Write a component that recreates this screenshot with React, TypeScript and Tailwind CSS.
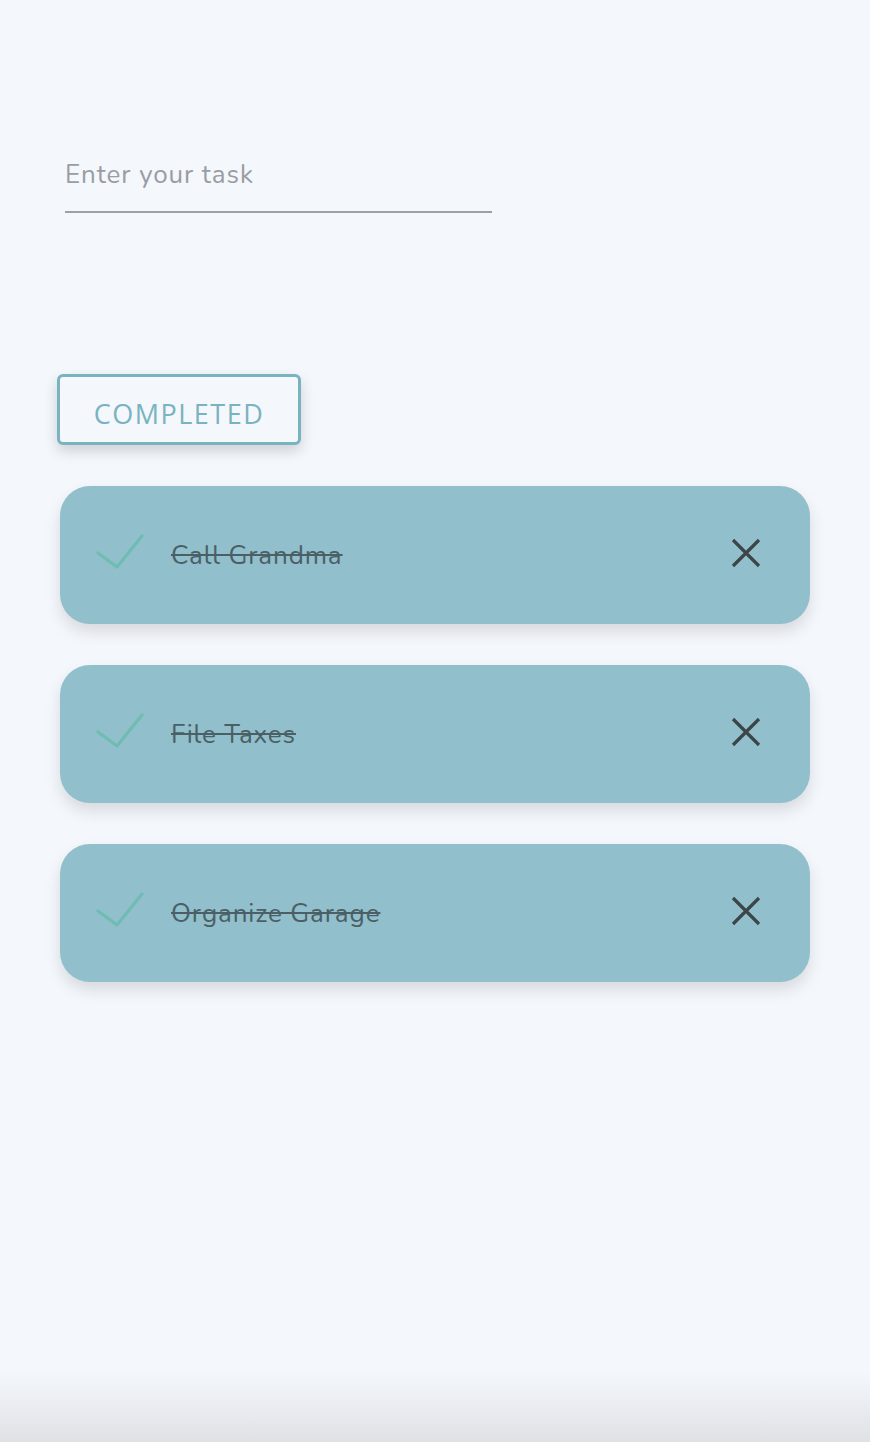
const tasks = ["Call Grandma", "File Taxes", "Organize Garage"]

function CheckIcon() {
  return (
    <svg width="48" height="36" viewBox="0 0 48 36" fill="none">
      <path d="M2 20 L21 34 L46 3" stroke="#6fbcb3" strokeWidth="3.2" strokeLinecap="round" strokeLinejoin="round" />
    </svg>
  )
}

function CloseIcon() {
  return (
    <svg width="30" height="30" viewBox="0 0 30 30" fill="none">
      <path d="M2 2 L28 28 M28 2 L2 28" stroke="#3c4548" strokeWidth="3.2" strokeLinecap="butt" />
    </svg>
  )
}

export default function App() {
  return (
    <div className="relative min-h-[1442px] bg-[#f4f7fc] font-['Nunito','Lato','Noto_Sans',sans-serif]">
      <div className="px-[65px] pt-[155px]">
        <input
          placeholder="Enter your task"
          className="w-[427px] border-b-2 border-[#9da1a6] bg-transparent pb-[17px] text-[26px] tracking-[0.9px] text-[#555] outline-none placeholder:text-[#999da3]"
        />
      </div>

      <div className="mt-[161px] px-[57px]">
        <button className="flex h-[71px] w-[244px] items-center justify-center rounded-[6px] border-[3px] border-[#7ab3c0] bg-[#f4f7fc] pt-[10px] font-['Open_Sans',sans-serif] text-[27px] tracking-[1.5px] text-[#7ab3c0] shadow-[0_6px_14px_rgba(0,0,0,0.16)]">
          COMPLETED
        </button>
      </div>

      <div className="mt-[41px] flex flex-col gap-[41px] px-[60px]">
        {tasks.map((t) => (
          <div
            key={t}
            className="flex h-[138px] w-[750px] items-center rounded-[30px] bg-[#92bfcc] pl-[36px] pr-[49px] shadow-[0_8px_16px_rgba(0,0,0,0.12)]"
          >
            <div className="mt-[-8px] w-[48px]">
              <CheckIcon />
            </div>
            <span className="ml-[27px] flex-1 text-[26px] tracking-[0.9px] text-[#4b5f66] line-through decoration-[#4b5f66]">
              {t}
            </span>
            <div className="mt-[-4px]">
              <CloseIcon />
            </div>
          </div>
        ))}
      </div>

      <div className="absolute bottom-0 left-0 h-[70px] w-full bg-gradient-to-b from-[#f4f7fc] to-[#dfe1e5]" />
    </div>
  )
}
